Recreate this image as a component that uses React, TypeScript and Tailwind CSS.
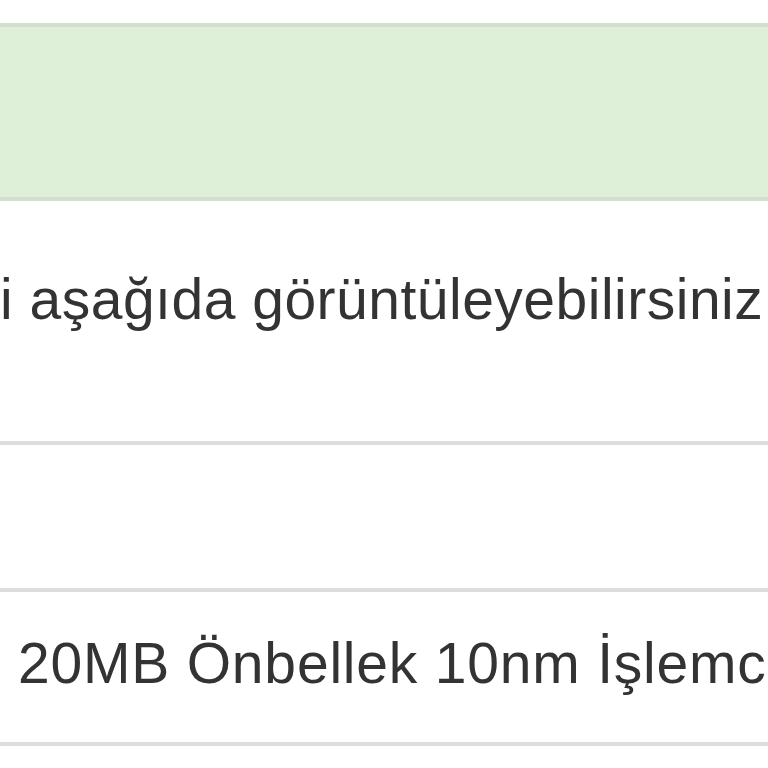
export default function App() {
  return (
    <div className="min-h-screen bg-white pt-[23px] font-['Liberation_Sans',Arial,sans-serif] text-[#333333]">
      <div className="overflow-hidden">
        {/* Header row (success) */}
        <div className="h-[178px] border-y-4 border-[#d5ddd1] bg-[#dff0d8]" />

        {/* Description row */}
        <div className="h-[240px] whitespace-nowrap pt-[66px] text-[57px] leading-[64px] tracking-[0.5px]">
          i aşağıda görüntüleyebilirsiniz
        </div>

        <div className="h-[151px] border-y-4 border-[#dddddd]" />

        {/* Product row */}
        <div className="h-[154px] whitespace-nowrap border-b-4 border-[#dddddd] pl-[18px] pt-[39px] text-[57px] leading-[64px] tracking-[0.8px]">
          20MB Önbellek 10nm İşlemci
        </div>
      </div>
    </div>
  );
}
